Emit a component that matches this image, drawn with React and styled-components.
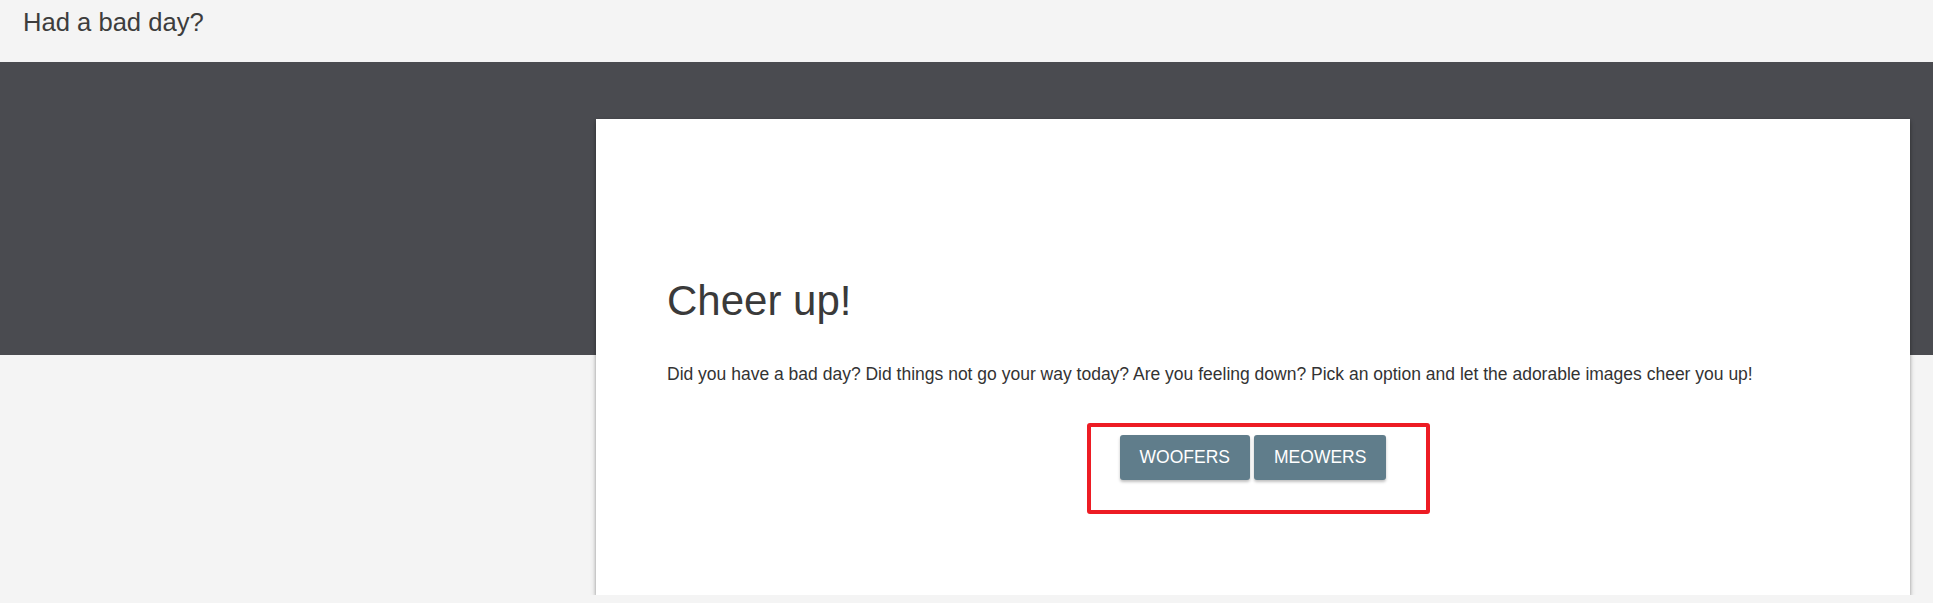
import React from "react";
import styled, { createGlobalStyle } from "styled-components";

const Global = createGlobalStyle`
  html, body { margin: 0; padding: 0; }
  body {
    background: #f4f4f4;
    font-family: "Liberation Sans", Arial, sans-serif;
    color: #3a3a3a;
  }
`;

const Header = styled.header`
  height: 62px;
  box-sizing: border-box;
  padding: 8px 23px 0;
  background: #f4f4f4;
`;

const SiteTitle = styled.h1`
  margin: 0;
  font-size: 25.6px;
  font-weight: 400;
  color: #3d3d3d;
`;

const Hero = styled.div`
  height: 293px;
  background: #4a4b50;
`;

const Main = styled.main`
  margin-top: -236px;
  padding: 0 23px 0 596px;
`;

const Card = styled.section`
  background: #fff;
  box-sizing: border-box;
  height: 476px;
  padding: 158px 71px 0;
  box-shadow: 0 3px 5px rgba(0, 0, 0, 0.28), 0 1px 3px rgba(0, 0, 0, 0.18);
`;

const Heading = styled.h2`
  margin: 0;
  font-size: 42px;
  font-weight: 400;
  color: #3a3a3a;
`;

const Text = styled.p`
  margin: 39px 0 0;
  font-size: 17.5px;
  color: #333;
`;

const ButtonRow = styled.div`
  position: relative;
  display: flex;
  justify-content: center;
  gap: 4px;
  margin: 50px auto 0;
  width: max-content;
`;

const Button = styled.button`
  height: 45px;
  padding: 0 20px;
  border: none;
  border-radius: 3px;
  background: #607d8b;
  color: #fff;
  font-family: "Liberation Sans", Arial, sans-serif;
  font-size: 17.5px;
  text-transform: uppercase;
  box-shadow: 0 2px 3px rgba(0, 0, 0, 0.25);
  cursor: pointer;
`;

const Annotation = styled.div`
  position: absolute;
  top: -12px;
  left: -33px;
  right: -44px;
  bottom: -34px;
  border: 4px solid #ed1c24;
  border-radius: 3px;
  pointer-events: none;
`;

export default function App() {
  return (
    <>
      <Global />
      <Header>
        <SiteTitle>Had a bad day?</SiteTitle>
      </Header>
      <Hero />
      <Main>
        <Card>
          <Heading>Cheer up!</Heading>
          <Text>
            Did you have a bad day? Did things not go your way today? Are you feeling down? Pick an option and let the adorable images cheer you up!
          </Text>
          <ButtonRow>
            <Button>Woofers</Button>
            <Button>Meowers</Button>
            <Annotation />
          </ButtonRow>
        </Card>
      </Main>
    </>
  );
}
